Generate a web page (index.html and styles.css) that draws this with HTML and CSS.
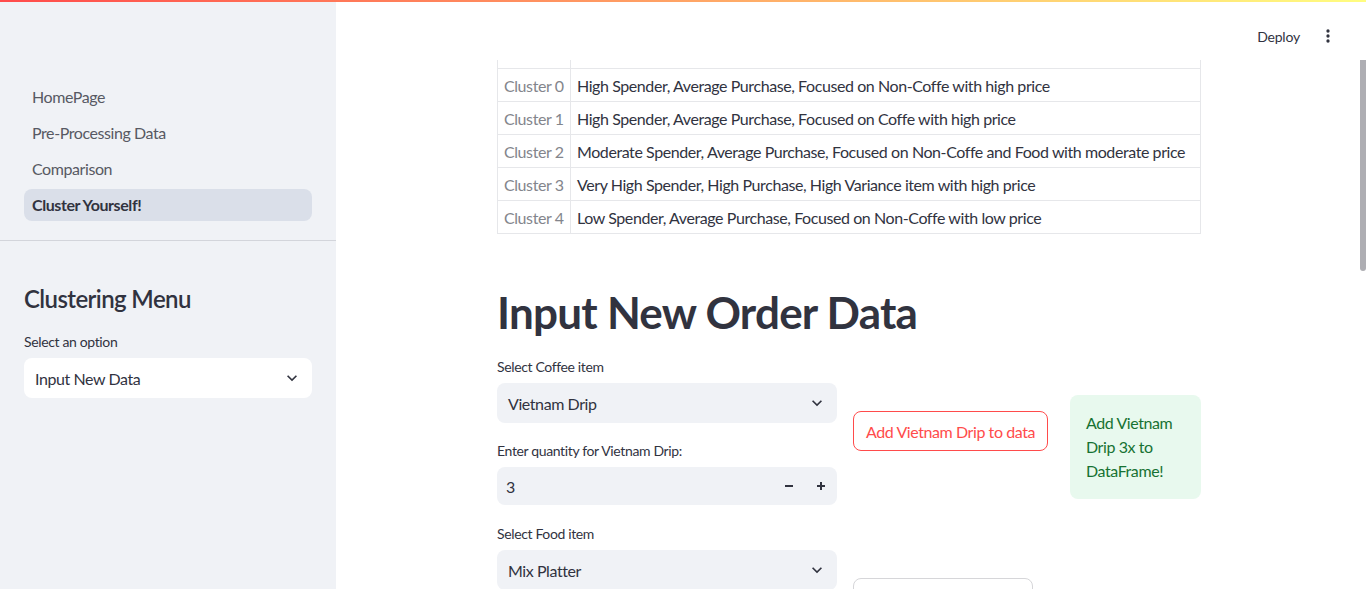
FILE: index.html
```html
<!DOCTYPE html>
<html lang="en">
<head>
<meta charset="utf-8">
<title>Cluster Yourself!</title>
<link rel="stylesheet" href="styles.css">
</head>
<body>
<div class="decoration"></div>
<div class="app">
  <aside class="sidebar">
    <nav class="nav">
      <a class="nav-link">HomePage</a>
      <a class="nav-link">Pre-Processing Data</a>
      <a class="nav-link">Comparison</a>
      <a class="nav-link active">Cluster Yourself!</a>
    </nav>
    <div class="sidebar-content">
      <h2 class="sidebar-title">Clustering Menu</h2>
      <div class="widget-label">Select an option</div>
      <div class="select select-white">
        <span>Input New Data</span>
        <svg class="chev" viewBox="0 0 24 24" width="20" height="20"><path d="M7.41 8.59L12 13.17l4.59-4.58L18 10l-6 6-6-6 1.41-1.41z" fill="#31333f"/></svg>
      </div>
    </div>
  </aside>
  <main class="main">
    <header class="header">
      <span class="deploy">Deploy</span>
      <span class="kebab">
        <svg viewBox="0 0 24 24" width="20" height="20"><circle cx="12" cy="6" r="2" fill="#31333f"/><circle cx="12" cy="12" r="2" fill="#31333f"/><circle cx="12" cy="18" r="2" fill="#31333f"/></svg>
      </span>
    </header>
    <div class="scroll-thumb"></div>
    <div class="block">
      <table class="cluster-table">
        <thead>
          <tr><th class="idx"></th><th></th></tr>
        </thead>
        <tbody>
          <tr><td class="idx">Cluster 0</td><td>High Spender, Average Purchase, Focused on Non-Coffe with high price</td></tr>
          <tr><td class="idx">Cluster 1</td><td>High Spender, Average Purchase, Focused on Coffe with high price</td></tr>
          <tr><td class="idx">Cluster 2</td><td>Moderate Spender, Average Purchase, Focused on Non-Coffe and Food with moderate price</td></tr>
          <tr><td class="idx">Cluster 3</td><td>Very High Spender, High Purchase, High Variance item with high price</td></tr>
          <tr><td class="idx">Cluster 4</td><td>Low Spender, Average Purchase, Focused on Non-Coffe with low price</td></tr>
        </tbody>
      </table>

      <h1 class="page-title">Input New Order Data</h1>

      <div class="row">
        <div class="col col-a">
          <div class="field">
            <div class="widget-label">Select Coffee item</div>
            <div class="select">
              <span>Vietnam Drip</span>
              <svg class="chev" viewBox="0 0 24 24" width="20" height="20"><path d="M7.41 8.59L12 13.17l4.59-4.58L18 10l-6 6-6-6 1.41-1.41z" fill="#31333f"/></svg>
            </div>
          </div>
          <div class="field">
            <div class="widget-label">Enter quantity for Vietnam Drip:</div>
            <div class="number-input">
              <span class="num-value">3</span>
              <span class="step">
                <svg viewBox="0 0 10 10" width="10" height="10"><path d="M1 5h8" stroke="#31333f" stroke-width="2"/></svg>
              </span>
              <span class="step">
                <svg viewBox="0 0 10 10" width="10" height="10"><path d="M1 5h8M5 1v8" stroke="#31333f" stroke-width="2"/></svg>
              </span>
            </div>
          </div>
        </div>
        <div class="col col-b">
          <button class="btn btn-red">Add Vietnam Drip to data</button>
        </div>
        <div class="col col-c">
          <div class="alert-success">Add Vietnam Drip 3x to DataFrame!</div>
        </div>
      </div>

      <div class="row">
        <div class="col col-a">
          <div class="field">
            <div class="widget-label">Select Food item</div>
            <div class="select">
              <span>Mix Platter</span>
              <svg class="chev" viewBox="0 0 24 24" width="20" height="20"><path d="M7.41 8.59L12 13.17l4.59-4.58L18 10l-6 6-6-6 1.41-1.41z" fill="#31333f"/></svg>
            </div>
          </div>
        </div>
        <div class="col col-b">
          <button class="btn btn-plain">Add Mix Platter to data</button>
        </div>
        <div class="col col-c"></div>
      </div>
    </div>
  </main>
</div>
</body>
</html>
```
FILE: styles.css
```css
* { box-sizing: border-box; }

html, body {
  margin: 0;
  padding: 0;
  height: 589px;
  overflow: hidden;
}

body {
  font-family: Lato, "Noto Sans", sans-serif;
  color: #31333f;
  background: #ffffff;
  font-size: 16px;
  letter-spacing: -0.42px;
}

.decoration {
  position: fixed;
  top: 0;
  left: 0;
  right: 0;
  height: 2px;
  background: linear-gradient(90deg, #ff4b4b, #fffd80);
  z-index: 10;
}

.app {
  display: flex;
  height: 589px;
}

/* Sidebar */
.sidebar {
  width: 336px;
  flex: 0 0 336px;
  background: #f0f2f6;
  height: 100%;
}

.nav {
  display: flex;
  flex-direction: column;
  gap: 4px;
  padding: 81px 24px 19px;
  border-bottom: 1px solid #d3d5db;
}

.nav-link {
  display: block;
  height: 32px;
  line-height: 31px;
  padding: 0 8px;
  border-radius: 8px;
  color: #575963;
  font-size: 16px;
}

.nav-link.active {
  background: #dadfe9;
  color: #31333f;
  font-weight: 700;
}

.sidebar-content {
  padding: 43px 24px 0;
}

.sidebar-title {
  margin: 0 0 17px;
  font-size: 24px;
  font-weight: 600;
  line-height: 29px;
  letter-spacing: -0.6px;
  color: #31333f;
}

.widget-label {
  height: 24px;
  line-height: 24px;
  font-size: 14px;
  letter-spacing: -0.36px;
  margin-bottom: 4px;
  color: #31333f;
}

.select {
  display: flex;
  align-items: center;
  justify-content: space-between;
  height: 40px;
  padding: 0 10px 0 11px;
  background: #f0f2f6;
  border-radius: 8px;
  font-size: 16px;
}

.select-white {
  background: #ffffff;
}

.chev { display: block; }

/* Main */
.main {
  flex: 1;
  position: relative;
  height: 100%;
  padding: 0 6px 0 2px;
  overflow: hidden;
}

.header {
  position: absolute;
  top: 0;
  left: 0;
  right: 0;
  height: 60px;
  background: #ffffff;
  z-index: 5;
  display: flex;
  align-items: center;
  justify-content: flex-end;
  padding: 12px 28px 0 0;
  gap: 18px;
}

.deploy {
  font-size: 14px;
  letter-spacing: -0.2px;
  color: #31333f;
}

.kebab { display: flex; }

.scroll-thumb {
  position: absolute;
  top: 60px;
  right: 0;
  width: 6px;
  height: 211px;
  background: #aeaeb3;
  border-radius: 0 0 3px 3px;
  z-index: 6;
}

.block {
  width: 704px;
  margin: 0 auto;
  padding-top: 35px;
}

.cluster-table {
  width: 100%;
  border-collapse: collapse;
  font-size: 16px;
}

.cluster-table th,
.cluster-table td {
  height: 33px;
  padding: 0 6px;
  border: 1px solid #e6e7ea;
  text-align: left;
  font-weight: 400;
  white-space: nowrap;
  line-height: 31px;
}

.cluster-table .idx {
  width: 73px;
  color: #83858c;
}

.page-title {
  margin: 0;
  padding: 52px 0 17px;
  font-size: 44px;
  line-height: 52px;
  font-weight: 700;
  letter-spacing: -0.75px;
  color: #31333f;
}

.row {
  display: flex;
  gap: 16px;
  margin-bottom: 17px;
}

.col-a {
  width: 340px;
  display: flex;
  flex-direction: column;
  gap: 16px;
}

.col-b { width: 201px; }
.col-c { width: 131px; }

.number-input {
  display: flex;
  align-items: center;
  height: 38px;
  margin-top: 2px;
  background: #f0f2f6;
  border-radius: 8px;
  padding-left: 9px;
}

.num-value { flex: 1; }

.step {
  width: 32px;
  display: flex;
  justify-content: center;
  align-items: center;
}

.btn {
  margin-top: 56px;
  height: 40px;
  padding: 0 12px;
  border-radius: 8px;
  background: #ffffff;
  font-family: inherit;
  font-size: 16px;
  letter-spacing: -0.42px;
  white-space: nowrap;
}

.btn-red {
  border: 1px solid #ff4b4b;
  color: #ff4b4b;
}

.btn-plain {
  border: 1px solid #d6d6d9;
  color: #31333f;
}

.alert-success {
  margin-top: 40px;
  padding: 16px;
  border-radius: 8px;
  background: #e8f9ee;
  color: #177233;
  font-size: 16px;
  line-height: 24px;
}
```
